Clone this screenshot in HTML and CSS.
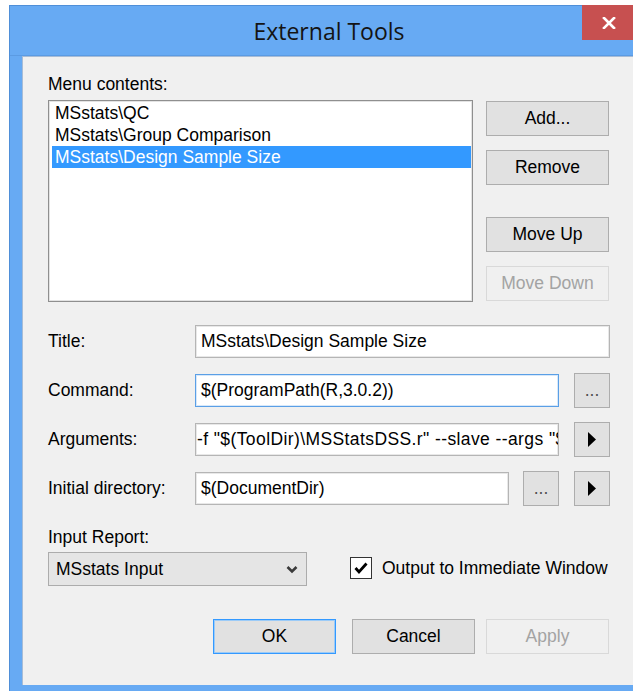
FILE: index.html
```html
<!DOCTYPE html>
<html lang="en">
<head>
<meta charset="utf-8">
<title>External Tools</title>
<link rel="stylesheet" href="styles.css">
</head>
<body>
<div class="window">
  <div class="titlebar">
    <span class="spacer"></span>
    <span class="title">External Tools</span>
    <div class="close">
      <svg width="14" height="12" viewBox="0 0 14 12" aria-hidden="true">
        <path d="M2 1 L12 11 M12 1 L2 11" stroke="#fff" stroke-width="2.6" stroke-linecap="square" fill="none"/>
      </svg>
    </div>
  </div>

  <div class="client">
    <div class="label label-menu">Menu contents:</div>
    <div class="menu-row">
      <div class="listbox">
        <div class="item">MSstats\QC</div>
        <div class="item">MSstats\Group Comparison</div>
        <div class="item selected">MSstats\Design Sample Size</div>
      </div>
      <div class="side-buttons">
        <button class="btn">Add...</button>
        <button class="btn">Remove</button>
        <button class="btn btn-move-up">Move Up</button>
        <button class="btn" disabled>Move Down</button>
      </div>
    </div>

    <div class="fields">
      <div class="field-row">
        <span class="field-label">Title:</span>
        <div class="field-controls">
          <div class="textbox">MSstats\Design Sample Size</div>
        </div>
      </div>
      <div class="field-row">
        <span class="field-label">Command:</span>
        <div class="field-controls">
          <div class="textbox focused">$(ProgramPath(R,3.0.2))</div>
          <button class="btn small-btn dots">...</button>
        </div>
      </div>
      <div class="field-row">
        <span class="field-label">Arguments:</span>
        <div class="field-controls">
          <div class="textbox scrolled"><span class="scroll-text">-f "$(ToolDir)\MSStatsDSS.r" --slave --args "$(InputReportTempPath)"</span></div>
          <button class="btn small-btn arrow">
            <svg width="8" height="15" viewBox="0 0 8 15" aria-hidden="true"><polygon points="0,0 8,7.5 0,15" fill="#000"/></svg>
          </button>
        </div>
      </div>
      <div class="field-row">
        <span class="field-label">Initial directory:</span>
        <div class="field-controls">
          <div class="textbox short">$(DocumentDir)</div>
          <button class="btn small-btn dots dir-browse">...</button>
          <button class="btn small-btn arrow">
            <svg width="8" height="15" viewBox="0 0 8 15" aria-hidden="true"><polygon points="0,0 8,7.5 0,15" fill="#000"/></svg>
          </button>
        </div>
      </div>
    </div>

    <div class="label label-report">Input Report:</div>
    <div class="report-row">
      <div class="combo">
        <span>MSstats Input</span>
        <svg width="12" height="9" viewBox="0 0 12 9" aria-hidden="true"><polyline points="1.5,2 6,6.5 10.5,2" fill="none" stroke="#3a3a3a" stroke-width="2.6"/></svg>
      </div>
      <label class="check">
        <span class="checkbox">
          <svg width="16" height="16" viewBox="0 0 16 16" aria-hidden="true"><polyline points="2.5,8 6,12 13.5,3.5" fill="none" stroke="#000" stroke-width="2.8"/></svg>
        </span>
        <span>Output to Immediate Window</span>
      </label>
    </div>

    <div class="dialog-buttons">
      <button class="btn btn-ok">OK</button>
      <button class="btn btn-cancel">Cancel</button>
      <button class="btn btn-apply" disabled>Apply</button>
    </div>
  </div>
</div>
</body>
</html>
```

FILE: styles.css
```css
html, body {
  margin: 0;
  padding: 0;
  background: #ffffff;
  overflow: hidden;
}

body {
  width: 633px;
  height: 691px;
  font-family: "Liberation Sans", Arial, sans-serif;
  font-size: 17.5px;
  color: #000;
}

/* window frame */
.window {
  margin: 5px 0 0 9px;
  width: 638px;
  border: 1px solid #4f8fd8;
  background: #67aaf3;
  padding: 0 0 8px 0;
}

.titlebar {
  height: 49px;
  display: grid;
  grid-template-columns: 1fr auto 1fr;
  border-bottom: 1px solid #5b9be3;
}

.title {
  font-family: "Open Sans", "Noto Sans", sans-serif;
  font-size: 23px;
  line-height: 50px;
  color: #141414;
}

.close {
  justify-self: end;
  align-self: start;
  width: 60px;
  height: 35px;
  margin: -1px 6px 0 0;
  background: #c75050;
  display: flex;
  align-items: center;
  justify-content: center;
  padding-right: 6px;
  box-sizing: border-box;
}

/* client area */
.client {
  margin-left: 12px;
  background: #f0f0f0;
  border-top: 1px solid #a7bcd6;
  border-left: 1px solid #a7bcd6;
  padding: 0 0 31px 25px;
}

.label {
  line-height: 20px;
  height: 20px;
  white-space: nowrap;
}

.label-menu {
  padding-top: 17px;
}

.menu-row {
  display: flex;
  gap: 13px;
  margin-top: 6px;
}

.listbox {
  width: 425px;
  height: 202px;
  box-sizing: border-box;
  background: #fff;
  border: 1px solid #8f8f8f;
  box-shadow: inset 0 0 0 1px #e3e3e3;
  padding: 1px 1px 1px 3px;
}

.item {
  height: 22px;
  box-sizing: border-box;
  padding: 1px 0 0 3px;
  line-height: 21px;
  white-space: nowrap;
}

.item.selected {
  background: #3399ff;
  color: #fff;
}

.side-buttons {
  display: flex;
  flex-direction: column;
  gap: 14px;
  padding-top: 1px;
}

.btn {
  font: inherit;
  color: #000;
  width: 123px;
  height: 35px;
  box-sizing: border-box;
  background: #e1e1e1;
  border: 1px solid #adadad;
  padding: 0;
  margin: 0;
  line-height: 33px;
  text-align: center;
}

.btn:disabled {
  background: #f0f0f0;
  border-color: #d9d9d9;
  color: #a3a3a3;
}

.btn-move-up {
  margin-top: 18px;
}

/* text fields */
.fields {
  display: flex;
  flex-direction: column;
  gap: 15px;
  margin-top: 22px;
}

.field-row {
  display: flex;
  align-items: center;
  height: 34px;
}

.field-label {
  width: 147px;
  white-space: nowrap;
}

.field-controls {
  width: 415px;
  display: flex;
  align-items: center;
  gap: 15px;
}

.textbox {
  flex: 1;
  height: 33px;
  box-sizing: border-box;
  background: #fff;
  border: 1px solid #b5b5b5;
  box-shadow: inset 0 0 0 1px #e8e8e8;
  padding: 0 4px 0 5px;
  line-height: 31px;
  white-space: nowrap;
  overflow: hidden;
}

.textbox.focused {
  border-color: #5a9fe6;
  box-shadow: inset 0 0 0 1px #d7e8fa;
}

.textbox.scrolled {
  padding: 0 0 0 1px;
}

.scroll-text {
  display: inline-block;
  letter-spacing: 0.4px;
}

.small-btn {
  width: 36px;
  flex: none;
}

.dots {
  color: #505050;
}

.dir-browse {
  margin-left: -1px;
}

.arrow {
  display: flex;
  align-items: center;
  justify-content: center;
}

/* input report + options */
.label-report {
  margin-top: 22px;
}

.report-row {
  display: flex;
  align-items: center;
  margin-top: 5px;
}

.combo {
  width: 259px;
  height: 34px;
  box-sizing: border-box;
  background: #e5e5e5;
  border: 1px solid #acacac;
  display: flex;
  align-items: center;
  justify-content: space-between;
  padding: 0 8px 0 7px;
}

.check {
  display: flex;
  align-items: center;
  gap: 10px;
  margin-left: 43px;
  margin-top: -2px;
}

.checkbox {
  width: 22px;
  height: 22px;
  box-sizing: border-box;
  border: 1px solid #333;
  background: #fff;
  display: flex;
  align-items: center;
  justify-content: center;
}

/* dialog buttons */
.dialog-buttons {
  display: flex;
  margin-top: 33px;
  padding-left: 165px;
}

.btn-ok {
  border: 1px solid #3399ff;
  box-shadow: inset 0 0 0 1px #9ccbf7;
}

.btn-cancel {
  margin-left: 16px;
}

.btn-apply {
  margin-left: 11px;
}
```
